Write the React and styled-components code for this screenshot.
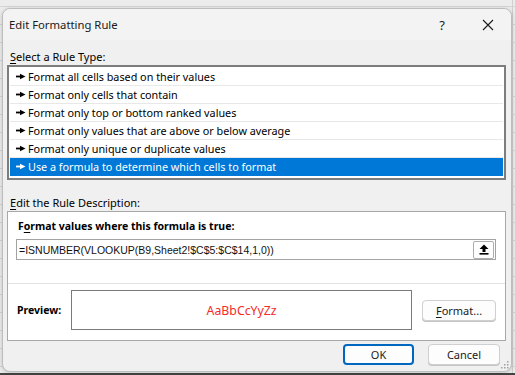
import { createGlobalStyle, styled } from "styled-components";

const rules = [
  "Format all cells based on their values",
  "Format only cells that contain",
  "Format only top or bottom ranked values",
  "Format only values that are above or below average",
  "Format only unique or duplicate values",
  "Use a formula to determine which cells to format",
];

function Bullet() {
  return (
    <svg width="10" height="7" viewBox="0 0 10 7">
      <rect x="0" y="2.6" width="5" height="1.8" fill="currentColor" />
      <path d="M4 0.8 L9.5 3.5 L4 6.2 Z" fill="currentColor" />
    </svg>
  );
}

function CollapseIcon() {
  return (
    <svg width="10" height="11" viewBox="0 0 10 11">
      <path d="M5 0.5 L9.5 5 L6.5 5 L6.5 8 L3.5 8 L3.5 5 L0.5 5 Z" fill="#000" />
      <rect x="0.5" y="9" width="9" height="1.6" fill="#000" />
    </svg>
  );
}

export default function App() {
  return (
    <>
      <GlobalStyle />
      <Desktop>
        <Dialog>
          <TitleBar>
            <Title>Edit Formatting Rule</Title>
            <TitleButton>?</TitleButton>
            <TitleButton>
              <svg width="12" height="12" viewBox="0 0 12 12">
                <path d="M1 1 L11 11 M11 1 L1 11" stroke="#1a1a1a" strokeWidth="1.1" />
              </svg>
            </TitleButton>
          </TitleBar>
          <Body>
            <Label>
              <u>S</u>elect a Rule Type:
            </Label>
            <RuleList>
              {rules.map((r, i) => (
                <RuleRow key={r} $selected={i === rules.length - 1}>
                  <Bullet />
                  <span>{r}</span>
                </RuleRow>
              ))}
            </RuleList>
            <Label $top={14}>
              <u>E</u>dit the Rule Description:
            </Label>
            <Panel>
              <FormulaSection>
                <Heading>
                  F<u>o</u>rmat values where this formula is true:
                </Heading>
                <FormulaBox>
                  <FormulaText>=ISNUMBER(VLOOKUP(B9,Sheet2!$C$5:$C$14,1,0))</FormulaText>
                  <RefButton>
                    <CollapseIcon />
                  </RefButton>
                </FormulaBox>
              </FormulaSection>
              <PreviewSection>
                <Heading>Preview:</Heading>
                <PreviewBox>AaBbCcYyZz</PreviewBox>
                <Button $w={74}>
                  <u>F</u>ormat...
                </Button>
              </PreviewSection>
            </Panel>
            <Footer>
              <Button $w={71} $primary>
                OK
              </Button>
              <Button $w={72}>Cancel</Button>
            </Footer>
          </Body>
          <Grip>
            <svg width="8" height="8" viewBox="0 0 8 8">
              {[
                [6, 0], [6, 3], [3, 3], [6, 6], [3, 6], [0, 6],
              ].map(([x, y]) => (
                <rect key={`${x}-${y}`} x={x} y={y} width="1.5" height="1.5" fill="#a0a0a0" />
              ))}
            </svg>
          </Grip>
        </Dialog>
        <SheetStrip>
          <SheetCell $w={50} />
          <SheetCell $w={38} $gray />
          <SheetCell $w={427} />
        </SheetStrip>
      </Desktop>
    </>
  );
}

const GlobalStyle = createGlobalStyle`
  html, body {
    margin: 0;
    padding: 0;
    background: #ededed;
  }
  body {
    font-family: "Noto Sans", "Segoe UI", sans-serif;
    font-size: 11px;
    color: #000;
  }
  u {
    text-decoration: underline;
    text-underline-offset: 2px;
  }
`;

const Desktop = styled.div`
  width: 515px;
  height: 375px;
  overflow: hidden;
  display: flex;
  flex-direction: column;
  background-color: #ececec;
  background-image: linear-gradient(#d4d4d4 1px, transparent 1px),
    linear-gradient(90deg, #cfcfcf 1px, transparent 1px);
  background-size: 100% 18px, 100% 100%;
  background-position: 0 6px, 512px 0;
`;

const Dialog = styled.div`
  position: relative;
  margin: 8px 0 0 2px;
  width: 508px;
  height: 362px;
  flex-shrink: 0;
  background: #f0f0f0;
  border: 1px solid #bdbdbd;
  border-radius: 8px;
  box-shadow: 0 1px 4px rgba(0, 0, 0, 0.18);
  display: flex;
  flex-direction: column;
`;

const TitleBar = styled.div`
  height: 31px;
  display: flex;
  align-items: center;
  padding-left: 6px;
  background: #f3f3f3;
  border-radius: 8px 8px 0 0;
`;

const Title = styled.div`
  flex: 1;
  font-size: 11.3px;
  color: #1a1a1a;
`;

const TitleButton = styled.div`
  width: 46px;
  height: 31px;
  display: flex;
  align-items: center;
  justify-content: center;
  font-size: 13px;
  color: #1a1a1a;
`;

const Body = styled.div`
  flex: 1;
  display: flex;
  flex-direction: column;
  padding: 1px 5px 0 4px;
`;

const Label = styled.div`
  font-size: 11px;
  height: 17px;
  line-height: 17px;
  padding-left: 3px;
  margin-top: ${(p) => p.$top || 7}px;
`;

const RuleList = styled.div`
  height: 109px;
  background: #fff;
  border: 2px solid #7d7d7d;
  padding: 1px;
  display: flex;
  flex-direction: column;
`;

const RuleRow = styled.div`
  height: 17px;
  flex-shrink: 0;
  display: flex;
  align-items: center;
  gap: 2px;
  padding-left: 6px;
  font-size: 10.8px;
  border-bottom: 1px solid ${(p) => (p.$selected ? "#0078d7" : "#e8e8e8")};
  background: ${(p) => (p.$selected ? "#0078d7" : "#fff")};
  color: ${(p) => (p.$selected ? "#fff" : "#000")};
  white-space: nowrap;
`;

const Panel = styled.div`
  height: 128px;
  background: #fff;
  border: 1px solid #a8a8a8;
  display: flex;
  flex-direction: column;
`;

const FormulaSection = styled.div`
  height: 65px;
  border-bottom: 1px solid #e3e3e3;
  padding: 6px 9px 0 8px;
  display: flex;
  flex-direction: column;
`;

const Heading = styled.div`
  font-weight: bold;
  font-size: 10.5px;
  height: 17px;
  line-height: 17px;
  padding-left: 2px;
`;

const FormulaBox = styled.div`
  margin-top: 4px;
  height: 19px;
  border: 1px solid #a3a3a3;
  display: flex;
  align-items: center;
  justify-content: space-between;
  padding: 0 1px 0 2px;
`;

const FormulaText = styled.span`
  font-family: "Liberation Sans", Arial, sans-serif;
  font-size: 10.5px;
  color: #111;
`;

const RefButton = styled.div`
  width: 19px;
  height: 16px;
  border: 1px solid #adadad;
  border-radius: 2px;
  background: #fff;
  display: flex;
  align-items: center;
  justify-content: center;
`;

const PreviewSection = styled.div`
  flex: 1;
  display: flex;
  align-items: center;
  padding: 0 9px 4px 7px;
`;

const PreviewBox = styled.div`
  width: 339px;
  height: 38px;
  border: 1px solid #7a7a7a;
  display: flex;
  align-items: center;
  justify-content: center;
  color: #f52a2a;
  font-size: 12.3px;
  margin: 0 10px 0 10px;
`;

const Button = styled.div`
  width: ${(p) => p.$w}px;
  height: 21px;
  box-sizing: border-box;
  display: flex;
  align-items: center;
  justify-content: center;
  background: #fdfdfd;
  border: ${(p) => (p.$primary ? "2px solid #0067c0" : "1px solid #d0d0d0")};
  border-radius: 4px;
  font-size: 11px;
  color: #1a1a1a;
  box-shadow: ${(p) => (p.$primary ? "none" : "0 1px 0 #c4c4c4")};
`;

const Footer = styled.div`
  display: flex;
  justify-content: flex-end;
  gap: 14px;
  padding-right: 6px;
  margin-top: 3px;
`;

const Grip = styled.div`
  position: absolute;
  right: 2px;
  bottom: 2px;
  line-height: 0;
`;

const SheetStrip = styled.div`
  display: flex;
  margin-top: 1px;
  height: 12px;
  background: #fff;
`;

const SheetCell = styled.div`
  width: ${(p) => p.$w}px;
  background: ${(p) => (p.$gray ? "#d9d9d9" : "#fff")};
  border-top: 2px solid #444;
`;
